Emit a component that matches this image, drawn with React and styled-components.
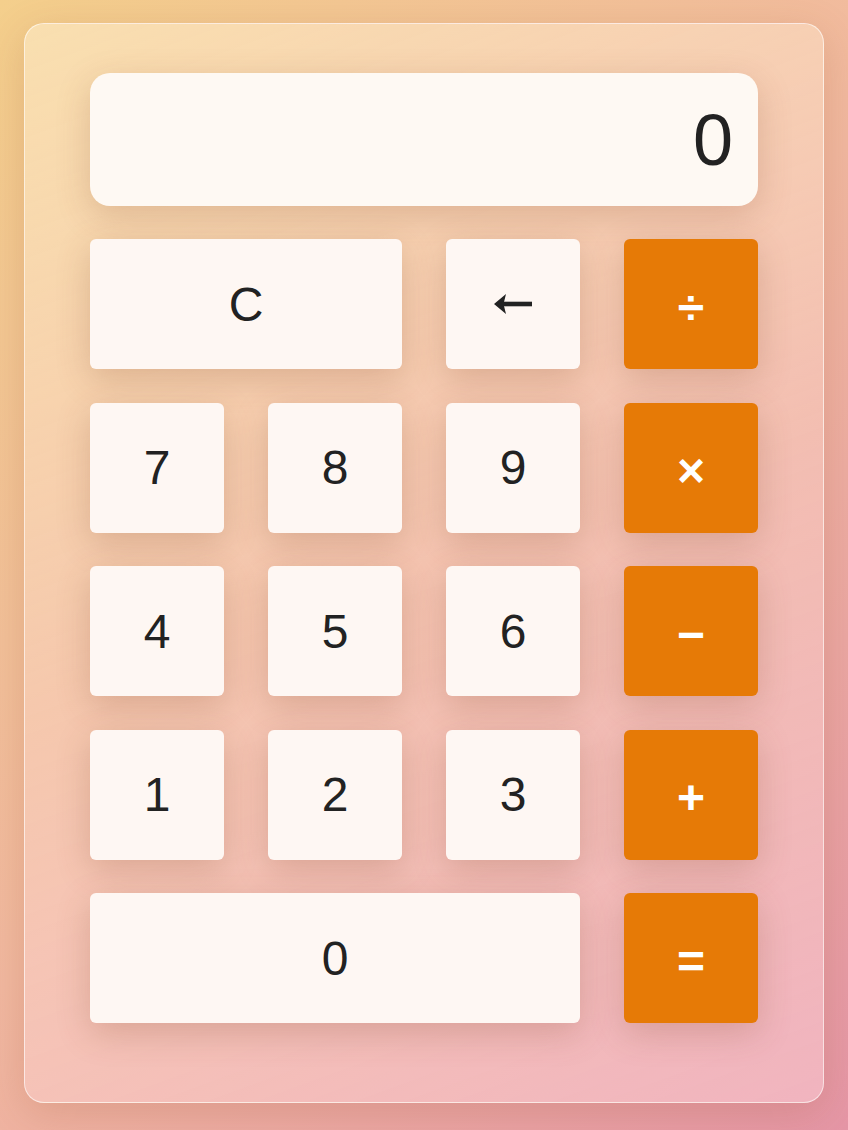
import React from "react";
import styled, { createGlobalStyle } from "styled-components";

const GlobalStyle = createGlobalStyle`
  html, body {
    margin: 0;
    padding: 0;
  }
  body {
    min-height: 1130px;
    background: linear-gradient(135deg, #f4cf8c 0%, #f1b8a0 50%, #e596a6 100%);
    font-family: "Liberation Sans", Arial, sans-serif;
  }
`;

const BackArrow = () => (
  <svg width="40" height="22" viewBox="0 0 40 22" fill="#222">
    <path d="M1 11 L13 1 L10.5 11 L13 21 Z" />
    <rect x="9" y="8.7" width="30" height="4.6" />
  </svg>
);

const KEYS = [
  { id: "clear", label: "C", span: 2 },
  { id: "back", label: <BackArrow /> },
  { id: "div", label: "÷", op: true },
  { id: "7", label: "7" },
  { id: "8", label: "8" },
  { id: "9", label: "9" },
  { id: "mul", label: "×", op: true },
  { id: "4", label: "4" },
  { id: "5", label: "5" },
  { id: "6", label: "6" },
  { id: "sub", label: "−", op: true },
  { id: "1", label: "1" },
  { id: "2", label: "2" },
  { id: "3", label: "3" },
  { id: "add", label: "+", op: true },
  { id: "0", label: "0", span: 3 },
  { id: "eq", label: "=", op: true }
];

const App = () => {
  return (
    <Page>
      <GlobalStyle />
      <Card>
        <Display>0</Display>
        <Keypad>
          {KEYS.map(key => (
            <Key key={key.id} $span={key.span} $op={key.op}>
              {key.label}
            </Key>
          ))}
        </Keypad>
      </Card>
    </Page>
  );
};

export default App;

const Page = styled.div`
  display: flex;
  justify-content: center;
  padding-top: 23px;
`;

const Card = styled.div`
  box-sizing: border-box;
  width: 800px;
  height: 1080px;
  padding: 49px 65px 0 65px;
  border-radius: 20px;
  border: 1px solid rgba(255, 255, 255, 0.6);
  background: linear-gradient(
    160deg,
    rgba(255, 240, 210, 0.5) 0%,
    rgba(255, 225, 215, 0.3) 50%,
    rgba(255, 215, 222, 0.45) 100%
  );
  box-shadow: 0 10px 40px rgba(150, 80, 40, 0.2);
`;

const Display = styled.div`
  box-sizing: border-box;
  height: 133px;
  padding: 0 25px;
  display: flex;
  align-items: center;
  justify-content: flex-end;
  border-radius: 20px;
  background: #fef9f3;
  color: #222;
  font-size: 72px;
  box-shadow: 0 10px 34px rgba(130, 70, 40, 0.22);
`;

const Keypad = styled.div`
  margin-top: 33px;
  display: grid;
  grid-template-columns: repeat(4, 134px);
  grid-auto-rows: 130px;
  column-gap: 44px;
  row-gap: 33.5px;
`;

const Key = styled.button`
  grid-column: span ${p => p.$span || 1};
  border: none;
  border-radius: 6px;
  padding: ${p => (p.$op ? "6px 0 0" : "0")};
  display: flex;
  align-items: center;
  justify-content: center;
  font-family: "Liberation Sans", Arial, sans-serif;
  font-size: 48px;
  font-weight: ${p => (p.$op ? 700 : 400)};
  color: ${p => (p.$op ? "#fff" : "#222")};
  background: ${p => (p.$op ? "#e67a06" : "#fef7f3")};
  box-shadow: 0 10px 34px rgba(130, 70, 40, 0.24);
`;
